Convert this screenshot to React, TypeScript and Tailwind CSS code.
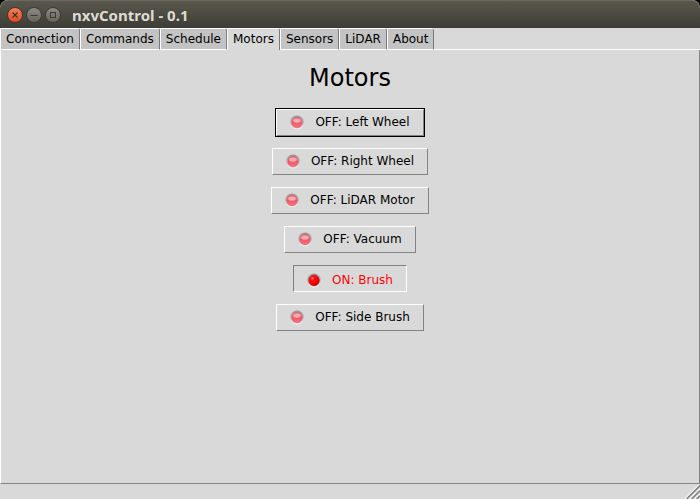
import { useState } from "react";

const tabs = ["Connection", "Commands", "Schedule", "Motors", "Sensors", "LiDAR", "About"];

const motorNames = ["Left Wheel", "Right Wheel", "LiDAR Motor", "Vacuum", "Brush", "Side Brush"];

function Led({ on }: { on: boolean }) {
  const id = on ? "led-on" : "led-off";
  return (
    <svg className="size-4 shrink-0" viewBox="0 0 16 16" aria-hidden="true">
      <defs>
        <linearGradient id={`${id}-rim`} x1="0" y1="0" x2="0" y2="1">
          <stop offset="0" stopColor="#949494" />
          <stop offset="0.5" stopColor="#c0c0c0" />
          <stop offset="1" stopColor="#f4f4f4" />
        </linearGradient>
        {on ? (
          <radialGradient id={id} cx="0.35" cy="0.3" r="0.75">
            <stop offset="0" stopColor="#ff8a8a" />
            <stop offset="0.25" stopColor="#ff1010" />
            <stop offset="0.7" stopColor="#f40000" />
            <stop offset="1" stopColor="#c00000" />
          </radialGradient>
        ) : (
          <linearGradient id={id} x1="0" y1="0" x2="0" y2="1">
            <stop offset="0" stopColor="#ea6876" />
            <stop offset="0.5" stopColor="#f0586a" />
            <stop offset="1" stopColor="#fb7280" />
          </linearGradient>
        )}
      </defs>
      <circle cx="8" cy="8.5" r="7" fill={`url(#${id}-rim)`} />
      <circle cx="8" cy="8.5" r="5.4" fill={`url(#${id})`} stroke={on ? "#a02020" : "#c8646f"} strokeWidth="0.5" />
      {!on && <ellipse cx="8" cy="6.6" rx="3.8" ry="2.2" fill="#ffc4c8" opacity="0.75" />}
    </svg>
  );
}

function WindowButton({ label, close, children }: { label: string; close?: boolean; children: React.ReactNode }) {
  return (
    <button
      type="button"
      aria-label={label}
      className={
        "flex size-4 items-center justify-center rounded-full border " +
        (close
          ? "border-[#4a352b] bg-linear-to-b from-[#f58059] to-[#df4a16]"
          : "border-[#3b3a34] bg-linear-to-b from-[#8c8a81] to-[#66645d]")
      }
    >
      <svg className="size-3.5 shrink-0" viewBox="0 0 14 14" fill="none" stroke="#3a3832" aria-hidden="true">
        {children}
      </svg>
    </button>
  );
}

export default function App() {
  const [activeTab, setActiveTab] = useState("Motors");
  const [running, setRunning] = useState<string[]>(["Brush"]);

  const toggle = (name: string) =>
    setRunning((r) => (r.includes(name) ? r.filter((n) => n !== name) : [...r, name]));

  return (
    <div className="bg-black">
      <div className="flex h-screen flex-col rounded-t-lg bg-[#d9d9d9] font-['DejaVu_Sans',sans-serif] text-xs text-black">
        <header className="flex h-7 shrink-0 items-center gap-[3px] rounded-t-lg border-t border-[#6b695f] bg-linear-to-b from-[#5a584d] to-[#3d3c37] pl-[7px]">
          <WindowButton label="Close" close>
            <path d="M4.5 4.5l5 5M9.5 4.5l-5 5" strokeWidth="1.3" />
          </WindowButton>
          <WindowButton label="Minimize">
            <path d="M3.5 7.5h7" />
          </WindowButton>
          <WindowButton label="Maximize">
            <rect x="4.5" y="4.5" width="5" height="5" />
          </WindowButton>
          <h1 className="ml-2 font-['Noto_Sans',sans-serif] text-[15px] font-bold text-[#dfdbd2]">nxvControl - 0.1</h1>
        </header>

        <nav role="tablist" className="flex h-[22px] shrink-0">
          {tabs.map((tab) => {
            const active = tab === activeTab;
            return (
              <button
                key={tab}
                type="button"
                role="tab"
                aria-selected={active}
                onClick={() => setActiveTab(tab)}
                className={
                  "rounded-tr-[3px] border-t border-r border-l border-t-white border-r-[#7b7b7b] border-l-white px-[5px] leading-5 " +
                  (active ? "bg-[#d9d9d9] pb-px" : "border-b border-b-white bg-[#c3c3c3]")
                }
              >
                {tab}
              </button>
            );
          })}
          <span className="flex-1 border-b border-white" />
        </nav>

        <main
          role="tabpanel"
          className="flex flex-1 flex-col items-center border-r border-b border-l border-r-[#828282] border-b-[#828282] border-l-white pt-3"
        >
          <h2 className="text-2xl leading-8">Motors</h2>
          <ul className="mt-[15px] flex flex-col items-center gap-3">
            {motorNames.map((name, i) => {
              const on = running.includes(name);
              return (
                <li key={name} className="flex">
                  <button
                    type="button"
                    aria-pressed={on}
                    onClick={() => toggle(name)}
                    className={
                      "flex h-[27px] items-center gap-2.5 border pr-[13px] pl-3 " +
                      (on
                        ? "border-t-[#828282] border-r-white border-b-white border-l-[#828282] pt-0.5 text-[#ff0000] "
                        : "border-t-white border-r-[#828282] border-b-[#828282] border-l-white pb-px ") +
                      (i === 0 ? "outline-1 outline-black" : "")
                    }
                  >
                    <Led on={on} />
                    {`${on ? "ON" : "OFF"}: ${name}`}
                  </button>
                </li>
              );
            })}
          </ul>
        </main>

        <footer className="flex h-[15px] shrink-0 items-end justify-end">
          <svg className="h-3.5 w-4" viewBox="0 0 16 14" fill="none" aria-hidden="true">
            <path d="M1 14L15 0M6 14L16 4M11 14L16 9" stroke="#ffffff" strokeWidth="1.4" />
            <path d="M2.5 14L16 0.5M7.5 14L16 5.5M12.5 14L16 10.5" stroke="#828282" strokeWidth="1.6" />
          </svg>
        </footer>
      </div>
    </div>
  );
}
